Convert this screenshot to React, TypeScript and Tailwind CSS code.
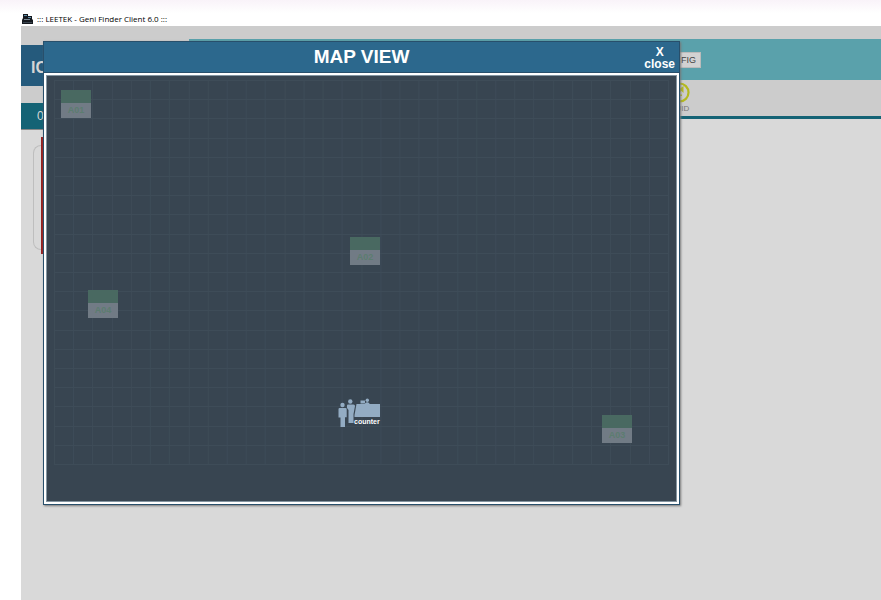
import type { ReactNode } from "react";

type Table = {
	name: string;
	position: string;
};

const tables: Table[] = [
	{ name: "A01", position: "left-[14px] top-[14px]" },
	{ name: "A02", position: "left-[303px] top-[161px]" },
	{ name: "A04", position: "left-[41px] top-[214px]" },
	{ name: "A03", position: "left-[555px] top-[339px]" },
];

const COLS = 32;
const ROWS = 20;

function TillIcon() {
	return (
		<svg className="w-3 h-3" viewBox="0 0 12 12" aria-hidden="true">
			<path d="M1 1h5v2h4v3l1 1v4H0V7l1-2z" fill="#15191f" />
			<path d="M2 2h3v1H2zM6 4h3v1H6z" fill="#5e8faa" />
			<path d="M2 6h6v1H2z" fill="#7c8b95" />
			<path d="M1 9h9v1H1z" fill="#3b4650" />
		</svg>
	);
}

function UuidIcon() {
	return (
		<svg className="w-[21px] h-[21px]" viewBox="0 0 21 21" aria-hidden="true">
			<circle cx="10.5" cy="10.5" r="9" fill="none" stroke="#b4b91f" strokeWidth="2.2" />
			<path d="M14.500 4v7l-2-2-2.500 1.500-1-2.500zM10 12.500h3v1.500h-3z" fill="#b4b91f" />
		</svg>
	);
}

function CounterIcon() {
	return (
		<svg className="w-[42px] h-[30px]" viewBox="0 0 42 30" aria-hidden="true">
			<g fill="#93acc3">
				<circle cx="4.5" cy="7" r="2.2" />
				<path d="M1.5 10h6q1.200 0 1.200 1.200v8H7V29H2.500V19.500H.5V11.200Q.5 10 1.500 10z" />
				<circle cx="12.300" cy="3.500" r="2.200" />
				<path d="M10 6.500h5.500q1.500 0 1.500 1.500l-1.500 8V25h-5V12L9 10V7.500q0-1 1-1z" />
				<path d="M18.500 6H42v13H16.500v-2z" />
				<path d="M22.500 2.500H27v3h-4.500z" />
				<circle cx="29.300" cy="2.300" r="1.700" />
				<path d="M27 5.500q2-2.500 4.500 0V7H27z" />
			</g>
		</svg>
	);
}

function GridLines() {
	return (
		<svg
			className="w-full h-[385px]"
			viewBox="0 0 616 385"
			preserveAspectRatio="none"
			stroke="#3e4c58"
			aria-hidden="true"
		>
			{Array.from({ length: COLS + 1 }, (_, i) => {
				const x = Math.round((i * 615) / COLS) + 0.5;
				return <line key={i} x1={x} x2={x} y1="0" y2="385" />;
			})}
			{Array.from({ length: ROWS + 1 }, (_, i) => {
				const y = Math.round((i * 384) / ROWS) + 0.5;
				return <line key={i} x1="0" x2="616" y1={y} y2={y} />;
			})}
		</svg>
	);
}

function TableMarker({ name, position }: Table) {
	return (
		<div className={`absolute flex flex-col w-[30px] h-7 ${position}`}>
			<div className="h-[13px] bg-[#496961]" />
			<div className="flex flex-1 items-center justify-center bg-[#717b85] text-[9px] leading-none font-bold text-[#5c7d70]">
				{name}
			</div>
		</div>
	);
}

function MapDialog() {
	return (
		<section
			role="dialog"
			aria-labelledby="map-title"
			className="absolute left-[22px] top-[15px] w-[637px] border border-[#284f6b] bg-white shadow-[1px_1px_2px_#777]"
		>
			<header className="relative flex h-[30px] items-center justify-center bg-[#2c688d] text-white">
				<h1 id="map-title" className="text-[19px] leading-6 font-bold">
					MAP VIEW
				</h1>
				<button
					type="button"
					className="absolute right-1 top-1 flex flex-col items-center text-xs font-bold"
				>
					<span className="leading-3">X</span>
					<span className="leading-3">close</span>
				</button>
			</header>
			<div className="p-[2px] border-t border-[#284f6b]">
				<div className="relative h-[427px] border border-[#8495a1] bg-[#384551] px-[7px] pt-1">
					<GridLines />
					{tables.map((table) => (
						<TableMarker key={table.name} {...table} />
					))}
					<div className="absolute left-[291px] top-[322px]">
						<CounterIcon />
						<span className="absolute left-4 top-5 text-[7px] leading-2 font-bold text-white">
							counter
						</span>
					</div>
				</div>
			</div>
		</section>
	);
}

function Sidebar({ children }: { children: ReactNode }) {
	return (
		<aside className="w-[168px] shrink-0 bg-[#d9d9d9]">
			<div className="h-[19px] bg-[#ccc]" />
			<div className="flex h-[41px] items-center bg-[#255a7c] pl-[10px] pt-1 text-base font-bold text-[#d5d5d5]">
				IC
			</div>
			<div className="h-[17px] bg-[#ccc]" />
			<div className="flex h-[27px] items-center border-b border-[#888] bg-[#146375] pl-4 text-xs text-[#d5d5d5]">
				0
			</div>
			{children}
		</aside>
	);
}

export default function App() {
	return (
		<div className="flex min-h-screen flex-col bg-white font-['Liberation_Sans',Arial,sans-serif]">
			<div className="flex h-[26px] items-end gap-[3px] bg-linear-to-b from-[#f9f3f9] via-white to-white pb-px pl-[22px] font-['Open_Sans',sans-serif] text-[8px] leading-3 text-black">
				<TillIcon />
				<span>::: LEETEK - Geni Finder Client 6.0 :::</span>
			</div>
			<main className="relative ml-[21px] flex flex-1 bg-[#d9d9d9]">
				<Sidebar>
					<div className="ml-3 mt-[7px] flex h-[117px] items-start">
						<div className="mt-2 h-[105px] w-2 rounded-l-lg border border-r-0 border-[#bebebe]" />
						<div className="h-full w-[2px] bg-[#962323]" />
					</div>
				</Sidebar>
				<div className="min-w-0 flex-1">
					<div className="h-[13px] bg-[#ccc]" />
					<div className="flex h-[41px] items-center bg-[#5aa1ab] pl-[487px]">
						<button
							type="button"
							className="h-4 border border-[#bbb] bg-[#d2d2d2] px-1 text-[9px] leading-3 text-[#444]"
						>
							FIG
						</button>
					</div>
					<div className="flex h-[39px] flex-col items-start border-b-[3px] border-[#146375] bg-[#ccc] pl-[480px] pt-[2px]">
						<div className="flex flex-col items-center">
							<UuidIcon />
							<span className="text-[8px] leading-3 text-[#777]">UUID</span>
						</div>
					</div>
				</div>
				<MapDialog />
			</main>
		</div>
	);
}
